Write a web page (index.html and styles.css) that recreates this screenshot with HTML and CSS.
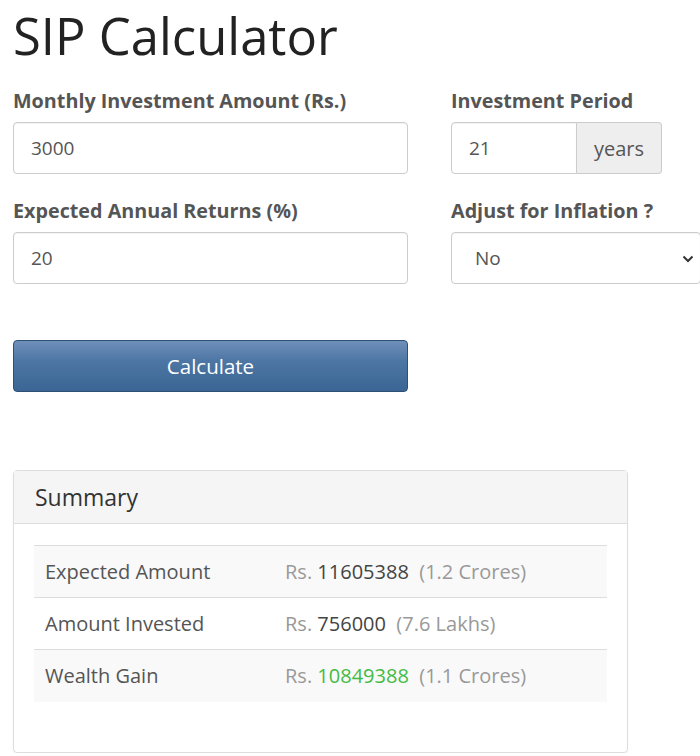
FILE: index.html
```html
<!DOCTYPE html>
<html lang="en">
<head>
    <meta charset="UTF-8">
    <meta name="viewport" content="width=device-width, initial-scale=1.0">
    <title>SIP Calculator</title>
    <link rel="stylesheet" href="styles.css">
</head>
<body>

    <div class="container">
        <h1>SIP Calculator</h1>

        <form class="calc-form">
            <div class="field">
                <label for="amount">Monthly Investment Amount (Rs.)</label>
                <input type="text" id="amount" value="3000">
            </div>

            <div class="field">
                <label for="period">Investment Period</label>
                <div class="input-group">
                    <input type="text" id="period" value="21">
                    <span class="addon">years</span>
                </div>
            </div>

            <div class="field">
                <label for="returns">Expected Annual Returns (%)</label>
                <input type="text" id="returns" value="20">
            </div>

            <div class="field">
                <label for="inflation">Adjust for Inflation ?</label>
                <div class="select-wrap">
                    <select id="inflation">
                        <option>No</option>
                        <option>Yes</option>
                    </select>
                    <svg class="caret" width="12" height="8" viewBox="0 0 12 8"><path d="M1.5 1.5 L6 6 L10.5 1.5" fill="none" stroke="#333" stroke-width="2"/></svg>
                </div>
            </div>

            <button type="button" class="btn-calc">Calculate</button>
        </form>

        <!-- Summary -->
        <div class="panel">
            <div class="panel-heading">Summary</div>
            <div class="panel-body">
                <table class="summary">
                    <tr>
                        <td>Expected Amount</td>
                        <td><span class="muted">Rs.</span> <span class="num">11605388</span> <span class="muted">&nbsp;(1.2 Crores)</span></td>
                    </tr>
                    <tr>
                        <td>Amount Invested</td>
                        <td><span class="muted">Rs.</span> <span class="num">756000</span> <span class="muted">&nbsp;(7.6 Lakhs)</span></td>
                    </tr>
                    <tr>
                        <td>Wealth Gain</td>
                        <td><span class="muted">Rs.</span> <span class="num gain">10849388</span> <span class="muted">&nbsp;(1.1 Crores)</span></td>
                    </tr>
                </table>
            </div>
        </div>
    </div>

</body>
</html>
```

FILE: styles.css
```css
* {
    box-sizing: border-box;
    font-family: "Open Sans", sans-serif;
}

body {
    margin: 0;
    background: #fff;
    color: #555;
    overflow: hidden;
}

.container {
    padding: 0 13px;
}

h1 {
    font-size: 50.8px;
    font-weight: 400;
    color: #222;
    margin: 7px 0 24px;
    line-height: 58px;
}

.calc-form {
    display: grid;
    grid-template-columns: 395px 250px;
    column-gap: 43px;
    row-gap: 25px;
}

.field label {
    display: block;
    font-size: 19.75px;
    font-weight: 700;
    color: #555;
    line-height: 24px;
    margin-bottom: 9px;
}

input,
select {
    width: 100%;
    height: 52px;
    padding: 0 17px;
    font-size: 19px;
    color: #555;
    border: 1px solid #ccc;
    border-radius: 4px;
    background: #fff;
    outline: none;
    box-shadow: inset 0 1px 1px rgba(0, 0, 0, 0.05);
}

.input-group {
    display: flex;
    width: 211px;
}

.input-group input {
    width: 126px;
    border-radius: 4px 0 0 4px;
}

.addon {
    width: 85px;
    height: 52px;
    display: flex;
    align-items: center;
    justify-content: center;
    font-size: 20px;
    color: #555;
    background: #eee;
    border: 1px solid #ccc;
    border-left: none;
    border-radius: 0 4px 4px 0;
}

.select-wrap {
    position: relative;
}

select {
    appearance: none;
    padding-left: 23px;
}

.caret {
    position: absolute;
    right: 7px;
    top: 23px;
    pointer-events: none;
}

.btn-calc {
    grid-column: 1;
    margin-top: 31px;
    height: 52px;
    font-size: 20.5px;
    color: #fff;
    border: 1px solid #2e5074;
    border-radius: 4px;
    background: linear-gradient(to bottom, #6f8fba 0%, #4d76a4 40%, #3a6594 100%);
    cursor: pointer;
}

.panel {
    width: 615px;
    margin-top: 78px;
    border: 1px solid #ddd;
    border-radius: 4px;
    box-shadow: 0 1px 2px rgba(0, 0, 0, 0.05);
}

.panel-heading {
    height: 53px;
    padding: 0 21px;
    display: flex;
    align-items: center;
    font-size: 23px;
    color: #333;
    background: #f5f5f5;
    border-bottom: 1px solid #ddd;
}

.panel-body {
    padding: 21px 20px 50px;
}

.summary {
    width: 100%;
    border-collapse: collapse;
    font-size: 20px;
}

.summary td {
    height: 52px;
    padding: 0 11px;
    border-top: 1px solid #ddd;
    color: #555;
}

.summary td:first-child {
    width: 240px;
}

.summary tr:nth-child(odd) td {
    background: #f9f9f9;
}

.muted {
    color: #999;
}

.num {
    color: #444;
}

.num.gain {
    color: #44bb44;
}
```
